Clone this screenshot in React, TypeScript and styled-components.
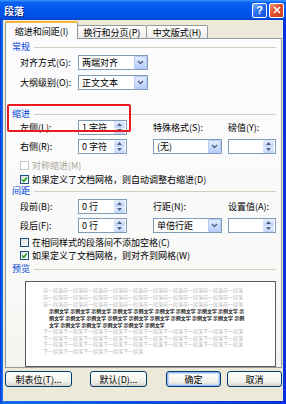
import React from 'react';
import styled, { createGlobalStyle } from 'styled-components';

const GlobalStyle = createGlobalStyle`
  html, body {
    margin: 0;
    padding: 0;
    width: 286px;
    height: 404px;
    overflow: hidden;
    background: #ece9d8;
  }
  body {
    font-family: "Noto Sans CJK SC", "Noto Sans", sans-serif;
    font-size: 9px;
    color: #000;
  }
`;

const Window = styled.div`
  width: 286px;
  height: 404px;
  display: flex;
  flex-direction: column;
  background: linear-gradient(to right, #0831d9, #166aee 2px, #0831d9 100%);
  box-sizing: border-box;
`;

const TitleBar = styled.div`
  height: 20px;
  flex: none;
  display: flex;
  align-items: center;
  padding: 0 2px 0 4px;
  background: linear-gradient(to bottom, #3d95ff 0%, #0a62f2 12%, #0055ea 50%, #0050e6 85%, #0343c8 100%);
`;

const Title = styled.span`
  flex: 1;
  color: #fff;
  font-weight: 700;
  font-size: 10px;
  text-shadow: 1px 1px 0 #0a1e7a;
`;

const CaptionButton = styled.div<{ $close?: boolean }>`
  width: 15px;
  height: 15px;
  margin-left: 2px;
  box-sizing: border-box;
  border: 1px solid #fff;
  border-radius: 2px;
  display: flex;
  align-items: center;
  justify-content: center;
  color: #fff;
  font-family: "Liberation Sans", sans-serif;
  font-weight: 700;
  font-size: 11px;
  background: ${p => p.$close
    ? 'linear-gradient(135deg, #f09a7a 0%, #e0502a 45%, #c8401c 100%)'
    : 'linear-gradient(135deg, #7fb0ff 0%, #2a6df2 45%, #1650d8 100%)'};
`;

const Frame = styled.div`
  flex: 1;
  margin: 0 3px 3px;
  background: #ece9d8;
  display: flex;
  flex-direction: column;
  padding: 2px 1px 0 2px;
`;

const TabStrip = styled.div`
  height: 17px;
  display: flex;
  align-items: flex-end;
  position: relative;
  z-index: 1;
  margin-bottom: -1px;
`;

const Tab = styled.div<{ $active?: boolean; $w: number }>`
  width: ${p => p.$w}px;
  box-sizing: border-box;
  height: ${p => (p.$active ? 18 : 14)}px;
  display: flex;
  align-items: center;
  justify-content: center;
  border: 1px solid #919b9c;
  border-bottom: ${p => (p.$active ? 'none' : '1px solid #919b9c')};
  border-top: ${p => (p.$active ? '2px solid #f5b43c' : '1px solid #919b9c')};
  border-radius: 2px 2px 0 0;
  margin-right: -1px;
  background: ${p => (p.$active ? '#fcfcfe' : 'linear-gradient(#fff, #ecebe6)')};
  white-space: nowrap;
`;

const Panel = styled.div`
  position: relative;
  height: 330px;
  box-sizing: border-box;
  border: 1px solid #919b9c;
  background: linear-gradient(#fcfcfe, #f8f8f6 80%, #f4f3ee);
  padding: 3px 5px 0 6px;
  display: flex;
  flex-direction: column;
`;

const SectionHead = styled.div<{ $mt: number }>`
  margin-top: ${p => p.$mt}px;
  height: 10px;
  display: flex;
  align-items: center;
  gap: 4px;
  color: #0046d5;
  line-height: 10px;
  &::after {
    content: '';
    flex: 1;
    height: 1px;
    background: #d0d0bf;
  }
`;

const Row = styled.div<{ $mt: number }>`
  margin-top: ${p => p.$mt}px;
  height: 15px;
  display: flex;
  align-items: center;
  padding-left: 8px;
`;

const Label = styled.span<{ $w?: number; $dim?: boolean }>`
  width: ${p => (p.$w ? `${p.$w}px` : 'auto')};
  flex: none;
  white-space: nowrap;
  color: ${p => (p.$dim ? '#aca899' : '#000')};
`;

const Grid = styled.div<{ $mt: number }>`
  margin-top: ${p => p.$mt}px;
  padding-left: 8px;
  display: grid;
  grid-template-columns: 58px 49px 26px 69px 6px 48px;
  grid-template-rows: 15px 15px;
  row-gap: 4px;
  align-items: center;
`;

const Cell = styled.div<{ $col: number; $row: number }>`
  grid-column: ${p => p.$col};
  grid-row: ${p => p.$row};
  white-space: nowrap;
`;

const Field = styled.div<{ $w?: number }>`
  width: ${p => (p.$w ? `${p.$w}px` : '100%')};
  height: 15px;
  box-sizing: border-box;
  border: 1px solid #7f9db9;
  background: #fff;
  display: flex;
  align-items: center;
`;

const FieldText = styled.span`
  flex: 1;
  padding-left: 3px;
  white-space: nowrap;
  overflow: hidden;
`;

const DropBtn = styled.div`
  width: 13px;
  height: 13px;
  box-sizing: border-box;
  border: 1px solid #b6cafa;
  border-radius: 1px;
  background: linear-gradient(#e4ecfe, #b8cdfa);
  display: flex;
  align-items: center;
  justify-content: center;
`;

const SpinBtns = styled.div`
  width: 11px;
  height: 13px;
  display: flex;
  flex-direction: column;
  margin-right: 1px;
`;

const SpinBtn = styled.div`
  flex: 1;
  display: flex;
  align-items: center;
  justify-content: center;
  background: linear-gradient(#e6eefe, #c2d4fb);
  border-radius: 1px;
`;

const CheckRow = styled.div<{ $mt: number }>`
  margin-top: ${p => p.$mt}px;
  height: 10px;
  display: flex;
  align-items: center;
  gap: 3px;
  padding-left: 8px;
  white-space: nowrap;
`;

const Box = styled.div<{ $dim?: boolean }>`
  width: 9px;
  height: 9px;
  box-sizing: border-box;
  border: 1px solid ${p => (p.$dim ? '#cac8bb' : '#1c5180')};
  background: ${p => (p.$dim ? '#fff' : 'linear-gradient(135deg, #dcdcd7, #fff)')};
  display: flex;
  align-items: center;
  justify-content: center;
`;

const Preview = styled.div`
  margin: 7px 0 0 13px;
  height: 87px;
  box-sizing: border-box;
  border: 1px solid #5a5a5a;
  background: #fff;
  padding: 4px 28px 0 17px;
  font-size: 5px;
  line-height: 7px;
  overflow: hidden;
`;

const PreviewPara = styled.div<{ $dark?: boolean; $lh?: number }>`
  color: ${p => (p.$dark ? '#111' : '#b8b8b8')};
  font-weight: ${p => (p.$dark ? 700 : 400)};
  line-height: ${p => p.$lh ?? 7}px;
  padding-left: ${p => (p.$dark ? 6 : 0)}px;
  word-break: break-all;
`;

const Highlight = styled.div`
  position: absolute;
  left: 1px;
  top: 65px;
  width: 124px;
  height: 28px;
  box-sizing: border-box;
  border: 2px solid #e8191f;
  border-radius: 2px;
  pointer-events: none;
`;

const ButtonRow = styled.div`
  margin-top: 3px;
  display: flex;
  align-items: center;
  padding-left: 0;
`;

const Button = styled.div<{ $w: number; $ml: number; $default?: boolean }>`
  width: ${p => p.$w}px;
  margin-left: ${p => p.$ml}px;
  height: 16px;
  box-sizing: border-box;
  border: 1px solid #003c74;
  border-radius: 3px;
  background: linear-gradient(#fff, #f0f0ea 70%, #d6d0c5);
  box-shadow: ${p => (p.$default ? 'inset 0 0 0 1px #9ab8f3, inset 0 0 0 2px #c6d8fb' : 'none')};
  display: flex;
  align-items: center;
  justify-content: center;
  white-space: nowrap;
`;

const Chevron = () => (
  <svg width="7" height="5" viewBox="0 0 7 5">
    <path d="M1 1 L3.5 3.5 L6 1" fill="none" stroke="#4d6185" strokeWidth="1.4" />
  </svg>
);

const Arrow = ({ up }: { up?: boolean }) => (
  <svg width="5" height="3" viewBox="0 0 5 3">
    <path d={up ? 'M0 3 L2.5 0 L5 3 Z' : 'M0 0 L2.5 3 L5 0 Z'} fill="#4d6185" />
  </svg>
);

const Select = ({ text, w }: { text: string; w?: number }) => (
  <Field $w={w}>
    <FieldText>{text}</FieldText>
    <DropBtn>
      <Chevron />
    </DropBtn>
  </Field>
);

const Spin = ({ text }: { text: string }) => (
  <Field>
    <FieldText>{text}</FieldText>
    <SpinBtns>
      <SpinBtn>
        <Arrow up />
      </SpinBtn>
      <SpinBtn>
        <Arrow />
      </SpinBtn>
    </SpinBtns>
  </Field>
);

const Check = ({ on, dim }: { on?: boolean; dim?: boolean }) => (
  <Box $dim={dim}>
    {on && (
      <svg width="7" height="7" viewBox="0 0 7 7">
        <path d="M1 3.5 L2.8 5.3 L6 1.5" fill="none" stroke="#21a121" strokeWidth="1.6" />
      </svg>
    )}
  </Box>
);

const App: React.FC = () => {
  return (
    <>
      <GlobalStyle />
      <Window>
        <TitleBar>
          <Title>段落</Title>
          <CaptionButton>?</CaptionButton>
          <CaptionButton $close>
            <svg width="8" height="8" viewBox="0 0 8 8">
              <path d="M1 1 L7 7 M7 1 L1 7" stroke="#fff" strokeWidth="1.6" />
            </svg>
          </CaptionButton>
        </TitleBar>
        <Frame>
          <TabStrip>
            <Tab $active $w={73}>缩进和间距(I)</Tab>
            <Tab $w={70}>换行和分页(P)</Tab>
            <Tab $w={62}>中文版式(H)</Tab>
          </TabStrip>
          <Panel>
            <SectionHead $mt={0}>常规</SectionHead>
            <Row $mt={3}>
              <Label $w={58}>对齐方式(G):</Label>
              <Select text="两端对齐" w={70} />
            </Row>
            <Row $mt={5}>
              <Label $w={58}>大纲级别(O):</Label>
              <Select text="正文文本" w={70} />
            </Row>

            <SectionHead $mt={19}>缩进</SectionHead>
            <Grid $mt={1}>
              <Cell $col={1} $row={1}>左侧(L):</Cell>
              <Cell $col={2} $row={1}><Spin text="1 字符" /></Cell>
              <Cell $col={4} $row={1}>特殊格式(S):</Cell>
              <Cell $col={6} $row={1}>磅值(Y):</Cell>
              <Cell $col={1} $row={2}>右侧(R):</Cell>
              <Cell $col={2} $row={2}><Spin text="0 字符" /></Cell>
              <Cell $col={4} $row={2}><Select text="(无)" /></Cell>
              <Cell $col={6} $row={2}><Spin text="" /></Cell>
            </Grid>
            <CheckRow $mt={6}>
              <Check dim />
              <Label $dim>对称缩进(M)</Label>
            </CheckRow>
            <CheckRow $mt={4}>
              <Check on />
              <Label>如果定义了文档网格，则自动调整右缩进(D)</Label>
            </CheckRow>

            <SectionHead $mt={2}>间距</SectionHead>
            <Grid $mt={3}>
              <Cell $col={1} $row={1}>段前(B):</Cell>
              <Cell $col={2} $row={1}><Spin text="0 行" /></Cell>
              <Cell $col={4} $row={1}>行距(N):</Cell>
              <Cell $col={6} $row={1}>设置值(A):</Cell>
              <Cell $col={1} $row={2}>段后(F):</Cell>
              <Cell $col={2} $row={2}><Spin text="0 行" /></Cell>
              <Cell $col={4} $row={2}><Select text="单倍行距" /></Cell>
              <Cell $col={6} $row={2}><Spin text="" /></Cell>
            </Grid>
            <CheckRow $mt={4}>
              <Check />
              <Label>在相同样式的段落间不添加空格(C)</Label>
            </CheckRow>
            <CheckRow $mt={3}>
              <Check on />
              <Label>如果定义了文档网格，则对齐到网格(W)</Label>
            </CheckRow>

            <SectionHead $mt={4}>预览</SectionHead>
            <Preview>
              <PreviewPara>{'前一段落'.repeat(30)}</PreviewPara>
              <PreviewPara $dark>{'示例文字 '.repeat(24)}</PreviewPara>
              <PreviewPara $lh={6.5}>{'下一段落'.repeat(35)}</PreviewPara>
            </Preview>
            <Highlight />
          </Panel>
          <ButtonRow>
            <Button $w={67} $ml={0}>制表位(T)...</Button>
            <Button $w={57} $ml={18}>默认(D)...</Button>
            <Button $w={55} $ml={19} $default>确定</Button>
            <Button $w={55} $ml={6}>取消</Button>
          </ButtonRow>
        </Frame>
      </Window>
    </>
  );
};

export default App;
